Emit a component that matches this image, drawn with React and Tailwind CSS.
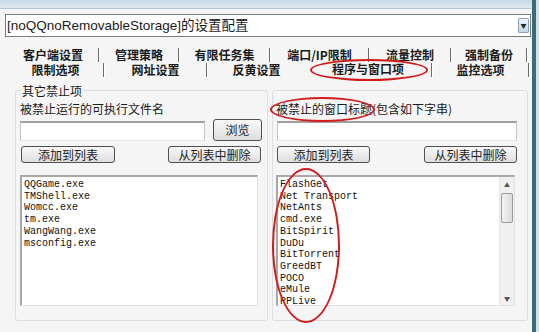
import React from 'react';

const leftFiles = ['QQGame.exe', 'TMShell.exe', 'Womcc.exe', 'tm.exe', 'WangWang.exe', 'msconfig.exe'];
const rightTitles = ['FlashGet', 'Net Transport', 'NetAnts', 'cmd.exe', 'BitSpirit', 'DuDu', 'BitTorrent', 'GreedBT', 'POCO', 'eMule', 'PPLive'];

const row1 = [
  { label: '客户端设置', w: 'w-[92px]' },
  { label: '管理策略', w: 'w-[80px]' },
  { label: '有限任务集', w: 'w-[91px]' },
  { label: '端口/IP限制', w: 'w-[99px]' },
  { label: '流量控制', w: 'w-[82px]' },
  { label: '强制备份', w: 'w-[76px]' },
];

function Sep() {
  return <div className="w-[2px] h-[14px] border-l border-[#6b6b6b] border-r border-r-white shrink-0" />;
}

function Btn({ children, className }) {
  return (
    <button
      className={`h-[17px] shrink-0 border border-[#505050] rounded-[3px] bg-linear-to-b from-[#f8f8f8] to-[#dedede] text-[12px] leading-none text-[#222] flex items-center justify-center ${className}`}
    >
      {children}
    </button>
  );
}

function Input() {
  return <div className="flex-1 min-w-0 h-[20px] bg-white border border-[#c4c4c4] border-t-2 border-t-[#a0a0a0] border-b-[#e4e4e4]" />;
}

function ListBox({ items, className, scroll }) {
  return (
    <div className={`h-[131px] bg-white border-l-2 border-t-2 border-[#a8a8a8] border-r border-b border-r-[#e2e2e2] border-b-[#e2e2e2] flex ${className}`}>
      <div className="flex-1 pt-[2px] pl-[2px] font-['Liberation_Mono',monospace] text-[10px] leading-[11.7px] text-[#111]">
        {items.map((it) => (
          <div key={it} className="whitespace-pre">{it}</div>
        ))}
      </div>
      {scroll && (
        <div className="w-[15px] bg-[#f0f0f0] border-l border-[#e6e6e6] flex flex-col items-center">
          <div className="h-[14px] flex items-center justify-center text-[6px] text-[#555]">▲</div>
          <div className="w-[12px] h-[30px] mt-[2px] border border-[#9a9a9a] rounded-[2px] bg-linear-to-r from-[#f4f4f4] to-[#dcdcdc]" />
          <div className="flex-1" />
          <div className="h-[14px] flex items-center justify-center text-[6px] text-[#555]">▼</div>
        </div>
      )}
    </div>
  );
}

export default function App() {
  return (
    <div className="w-[539px] h-[332px] overflow-hidden bg-[#f5f5f6] flex font-['Noto_Sans_CJK_SC',sans-serif] text-[#1a1a1a]">
      <div className="w-[532px] flex flex-col">
        {/* title strip */}
        <div className="h-[9px] bg-linear-to-b from-[#c6d9e7] to-[#dfe9f1] border-b border-[#b4c6d3]" />

        {/* combobox */}
        <div className="mt-[5px] ml-[5px] w-[526px] h-[23px] border border-[#7a7a7a] bg-white flex items-center">
          <span className="pl-[1px] font-['Liberation_Sans','Noto_Sans_CJK_SC',sans-serif] text-[13.5px] leading-none flex-1 whitespace-nowrap">[noQQnoRemovableStorage]的设置配置</span>
          <div className="w-[11px] h-[15px] mr-[1px] border border-[#8aa3b8] rounded-[1px] bg-linear-to-b from-[#eaf3fb] to-[#c3d8ea] flex items-center justify-center text-[6px] text-[#222]">▼</div>
        </div>

        {/* tabs */}
        <div className="mt-[10px] ml-[8px] flex h-[15px] items-center">
          {row1.map((t) => (
            <div key={t.label} className={`${t.w} flex items-center`}>
              <span className="flex-1 text-center text-[12px] font-bold leading-none whitespace-nowrap">{t.label}</span>
              <Sep />
            </div>
          ))}
        </div>
        <div className="ml-[8px] flex h-[16px] items-center">
          <div className="w-[97px] flex items-center">
            <span className="flex-1 text-center text-[12px] font-bold leading-none">限制选项</span>
            <Sep />
          </div>
          <div className="w-[103px] flex items-center">
            <span className="flex-1 text-center text-[12px] font-bold leading-none">网址设置</span>
            <Sep />
          </div>
          <div className="w-[97px] flex items-center">
            <span className="flex-1 text-center text-[12px] font-bold leading-none">反黄设置</span>
          </div>
          <div className="w-[128px] flex items-center relative">
            <span className="flex-1 text-center text-[12px] font-bold leading-none -mt-[2px]">程序与窗口项</span>
            <Sep />
            <div className="absolute left-[5px] -top-[4px] w-[118px] h-[22px] border-2 border-[#d21c1c] rounded-[50%]" />
          </div>
          <div className="w-[97px] flex items-center">
            <span className="flex-1 text-center text-[12px] font-bold leading-none">监控选项</span>
            <Sep />
          </div>
        </div>

        {/* tab page */}
        <div className="mt-[12px] pl-[15px] flex gap-[4px]">
          {/* left group */}
          <div className="relative w-[253px] h-[231px] shrink-0 border border-[#d9dfe3] rounded-[3px] pl-[4px]">
            <span className="absolute -top-[7px] left-[5px] px-[1px] bg-[#f5f5f6] text-[12px] leading-[13px]">其它禁止项</span>
            <div className="mt-[11px] text-[12px] leading-[14px]">被禁止运行的可执行文件名</div>
            <div className="mt-[3px] w-[242px] flex items-end">
              <Input />
              <Btn className="ml-[8px] w-[49px] h-[22px]">浏览</Btn>
            </div>
            <div className="mt-[5px] flex">
              <Btn className="ml-[1px] w-[94px]">添加到列表</Btn>
              <Btn className="ml-[53px] w-[93px]">从列表中删除</Btn>
            </div>
            <ListBox items={leftFiles} className="mt-[12px] w-[238px]" />
          </div>

          {/* right group */}
          <div className="relative w-[256px] h-[231px] shrink-0 border border-[#d9dfe3] rounded-[3px] pl-[3px]">
            <div className="relative mt-[11px] text-[12px] leading-[14px] whitespace-nowrap">
              被禁止的窗口标题(包含如下字串)
              <div className="absolute -left-[6px] -top-[5px] w-[105px] h-[25px] border-2 border-[#d21c1c] rounded-[50%]" />
            </div>
            <div className="mt-[3px] ml-[1px] w-[240px] h-[22px] flex items-end">
              <Input />
            </div>
            <div className="mt-[5px] flex">
              <Btn className="ml-[1px] w-[93px]">添加到列表</Btn>
              <Btn className="ml-[54px] w-[93px]">从列表中删除</Btn>
            </div>
            <ListBox items={rightTitles} className="mt-[12px] w-[239px]" scroll />
            <div className="absolute -left-[1px] top-[77px] w-[68px] h-[155px] border-2 border-[#d21c1c] rounded-[50%]" />
          </div>
        </div>
      </div>

      {/* window frame */}
      <div className="w-[4px] bg-[#3d6a76]" />
      <div className="w-[3px] bg-[#cfe2ea]" />
    </div>
  );
}
